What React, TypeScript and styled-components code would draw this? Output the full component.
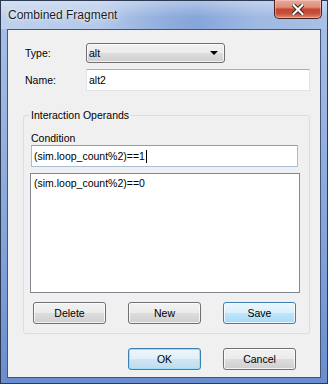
import styled, { createGlobalStyle } from 'styled-components';

const GlobalStyle = createGlobalStyle`
  html, body {
    margin: 0;
    padding: 0;
    background: #ffffff;
  }
  body {
    font-family: "Liberation Sans", Arial, sans-serif;
  }
`;

const UI_FONT = '"Liberation Sans", Arial, sans-serif';

const Window = styled.div`
  width: 328px;
  height: 384px;
  box-sizing: border-box;
  border: 1px solid #2c3a52;
  display: flex;
  flex-direction: column;
  background: linear-gradient(180deg, #a9c0e7 0%, #9ab4e1 30%, #7e9fd8 70%, #6a8dcf 100%);
`;

const TitleBar = styled.div`
  height: 28px;
  flex: none;
  display: flex;
  align-items: flex-start;
  padding-left: 7px;
  background:
    linear-gradient(180deg, rgba(255, 255, 255, 0.35) 0%, rgba(255, 255, 255, 0) 60%),
    linear-gradient(90deg, #bed0ec 0%, #b5c9ea 30%, #8eabdc 52%, #86a5da 60%, #9fb9e3 78%, #a9c0e7 100%);
`;

const Title = styled.span`
  flex: 1;
  font-family: ${UI_FONT};
  font-size: 12px;
  line-height: 14px;
  margin-top: 7px;
  color: #1b1b1b;
  text-shadow: 0 0 6px rgba(255, 255, 255, 0.9), 0 0 2px rgba(255, 255, 255, 0.8);
`;

const CloseButton = styled.div`
  width: 48px;
  height: 19px;
  box-sizing: border-box;
  margin-top: -1px;
  margin-right: 5px;
  border: 1px solid #4b2019;
  border-top: none;
  border-radius: 0 0 5px 5px;
  display: flex;
  align-items: center;
  justify-content: center;
  background: linear-gradient(180deg, #e9aa9c 0%, #dc8c7a 40%, #c8442f 52%, #c4513d 75%, #dc8a76 100%);
  box-shadow: inset 0 0 0 1px rgba(255, 220, 210, 0.45);
`;

const Client = styled.div`
  flex: 1;
  margin: 0 6px 5px 6px;
  border: 1px solid #44557a;
  background: #f0f0f0;
  display: flex;
  flex-direction: column;
  padding: 13px 0 0 15px;
  font-family: ${UI_FONT};
  font-size: 10.5px;
  color: #000000;
`;

const FieldRow = styled.div<{ $gap?: number; $height: number }>`
  display: flex;
  align-items: center;
  height: ${p => p.$height}px;
  margin-top: ${p => p.$gap ?? 0}px;
  padding-left: 2px;
`;

const FieldLabel = styled.span`
  width: 61px;
  line-height: 14px;
`;

const ComboBox = styled.div`
  width: 139px;
  height: 20px;
  box-sizing: border-box;
  border: 1px solid #707070;
  border-radius: 3px;
  display: flex;
  align-items: center;
  padding: 0 4px 0 2px;
  background: linear-gradient(180deg, #f2f2f2 0%, #ebebeb 50%, #dddddd 50%, #cfcfcf 100%);
  box-shadow: inset 0 0 0 1px rgba(255, 255, 255, 0.7);
`;

const ComboText = styled.span`
  flex: 1;
  line-height: 14px;
`;

const ComboArrow = styled.div`
  width: 0;
  height: 0;
  border-left: 4px solid transparent;
  border-right: 4px solid transparent;
  border-top: 4px solid #000000;
  margin-right: 2px;
`;

const TextBox = styled.div<{ $width: number; $focused?: boolean }>`
  width: ${p => p.$width}px;
  height: 22px;
  box-sizing: border-box;
  border: 1px solid ${p => (p.$focused ? '#a8bdd8' : '#e2e3ea')};
  border-top-color: ${p => (p.$focused ? '#7da2ce' : '#abadb3')};
  background: #ffffff;
  display: flex;
  align-items: center;
  padding-left: 2px;
  line-height: 14px;
`;

const Caret = styled.span`
  display: inline-block;
  width: 1px;
  height: 13px;
  background: #000000;
  margin-left: 1px;
`;

const Group = styled.fieldset`
  width: 287px;
  box-sizing: border-box;
  margin: 17px 0 0 0;
  padding: 0 0 9px 7px;
  border: 1px solid #d5dfe5;
  border-radius: 3px;
  min-width: 0;
`;

const GroupLegend = styled.legend`
  padding: 0 2px;
  margin-left: -2px;
  line-height: 14px;
`;

const ConditionLabel = styled.div`
  margin-top: 9px;
  line-height: 14px;
`;

const OperandList = styled.div`
  width: 270px;
  height: 120px;
  box-sizing: border-box;
  margin: 6px 0 0 -1px;
  border: 1px solid #828790;
  background: #ffffff;
  padding: 2px 0 0 3px;
  line-height: 14px;
`;

const ButtonRow = styled.div<{ $gap: number; $left: number }>`
  display: flex;
  gap: 22px;
  margin-top: ${p => p.$gap}px;
  padding-left: ${p => p.$left}px;
`;

const PushButton = styled.div<{ $variant?: 'hot' | 'default' }>`
  width: 73px;
  height: 22px;
  box-sizing: border-box;
  border: 1px solid ${p => (p.$variant ? '#3c7fb1' : '#707070')};
  border-radius: 3px;
  display: flex;
  align-items: center;
  justify-content: center;
  line-height: 14px;
  background: ${p =>
    p.$variant === 'hot'
      ? 'linear-gradient(180deg, #eaf6fd 0%, #d9f0fc 50%, #bee6fd 50%, #a7d9f5 100%)'
      : p.$variant === 'default'
        ? 'linear-gradient(180deg, #eef7fc 0%, #e1eff8 50%, #cfe6f4 50%, #bddcee 100%)'
        : 'linear-gradient(180deg, #f2f2f2 0%, #ebebeb 50%, #dddddd 50%, #cfcfcf 100%)'};
  box-shadow: inset 0 0 0 1px ${p => (p.$variant === 'default' ? '#9fdcf5' : 'rgba(255, 255, 255, 0.75)')};
`;

function CloseGlyph() {
  return (
    <svg width="12" height="11" viewBox="0 0 12 11">
      <path
        d="M1.5 1 L6 5.5 L10.5 1 M1.5 10 L6 5.5 L10.5 10"
        stroke="#3a1a14"
        strokeWidth="4"
        strokeLinecap="square"
        fill="none"
      />
      <path
        d="M1.5 1 L6 5.5 L10.5 1 M1.5 10 L6 5.5 L10.5 10"
        stroke="#ffffff"
        strokeWidth="2.2"
        strokeLinecap="square"
        fill="none"
      />
    </svg>
  );
}

export default function App() {
  return (
    <>
      <GlobalStyle />
      <Window>
        <TitleBar>
          <Title>Combined Fragment</Title>
          <CloseButton>
            <CloseGlyph />
          </CloseButton>
        </TitleBar>
        <Client>
          <FieldRow $height={20}>
            <FieldLabel>Type:</FieldLabel>
            <ComboBox>
              <ComboText>alt</ComboText>
              <ComboArrow />
            </ComboBox>
          </FieldRow>
          <FieldRow $height={22} $gap={6}>
            <FieldLabel>Name:</FieldLabel>
            <TextBox $width={224}>alt2</TextBox>
          </FieldRow>

          <Group>
            <GroupLegend>Interaction Operands</GroupLegend>
            <ConditionLabel>Condition</ConditionLabel>
            <TextBox $width={267} $focused>
              (sim.loop_count%2)==1
              <Caret />
            </TextBox>
            <OperandList>(sim.loop_count%2)==0</OperandList>
            <ButtonRow $gap={9} $left={2}>
              <PushButton>Delete</PushButton>
              <PushButton>New</PushButton>
              <PushButton $variant="hot">Save</PushButton>
            </ButtonRow>
          </Group>

          <ButtonRow $gap={14} $left={105}>
            <PushButton $variant="default">OK</PushButton>
            <PushButton>Cancel</PushButton>
          </ButtonRow>
        </Client>
      </Window>
    </>
  );
}
